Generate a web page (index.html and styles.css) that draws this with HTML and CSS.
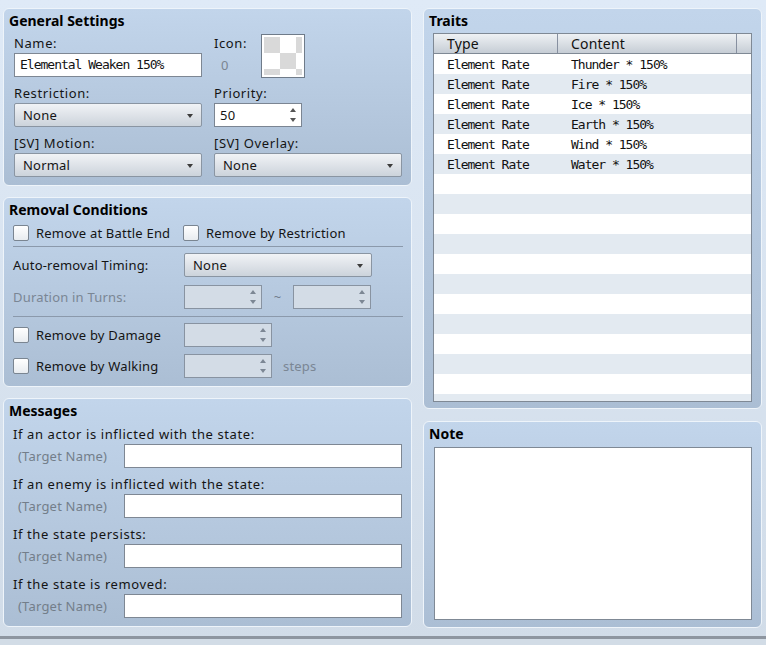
FILE: index.html
```html
<!DOCTYPE html>
<html>
<head>
<meta charset="utf-8">
<link rel="stylesheet" href="styles.css">
</head>
<body>
<div class="app">
  <div class="col left">
    <section class="panel general">
      <h2 class="ptitle">General Settings</h2>
      <div class="ggrid">
        <div class="field">
          <div class="lbl">Name:</div>
          <div class="textbox mono">Elemental Weaken 150%</div>
        </div>
        <div class="iconfield">
          <div class="iconlbl">
            <div class="lbl">Icon:</div>
            <div class="iconnum">0</div>
          </div>
          <div class="iconbox"><div class="checker"></div></div>
        </div>
        <div class="field">
          <div class="lbl">Restriction:</div>
          <div class="select w188"><span>None</span><span class="arrow"></span></div>
        </div>
        <div class="field">
          <div class="lbl">Priority:</div>
          <div class="spin w88"><span>50</span><span class="sarrows"><i class="up"></i><i class="dn"></i></span></div>
        </div>
        <div class="field">
          <div class="lbl">[SV] Motion:</div>
          <div class="select w188"><span>Normal</span><span class="arrow"></span></div>
        </div>
        <div class="field">
          <div class="lbl">[SV] Overlay:</div>
          <div class="select w188"><span>None</span><span class="arrow"></span></div>
        </div>
      </div>
    </section>

    <section class="panel removal">
      <h2 class="ptitle">Removal Conditions</h2>
      <div class="rbody">
        <div class="row checks">
          <label class="chk first"><span class="box"></span><span>Remove at Battle End</span></label>
          <label class="chk"><span class="box"></span><span>Remove by Restriction</span></label>
        </div>
        <div class="sep"></div>
        <div class="row r-auto">
          <span class="rlabel">Auto-removal Timing:</span>
          <div class="select w188"><span>None</span><span class="arrow"></span></div>
        </div>
        <div class="row r-dur">
          <span class="rlabel disabled">Duration in Turns:</span>
          <div class="spin w78 off"><span></span><span class="sarrows"><i class="up"></i><i class="dn"></i></span></div>
          <span class="tilde">~</span>
          <div class="spin w78 off"><span></span><span class="sarrows"><i class="up"></i><i class="dn"></i></span></div>
        </div>
        <div class="sep sep2"></div>
        <div class="row r-dmg">
          <label class="chk rlabel"><span class="box"></span><span>Remove by Damage</span></label>
          <div class="spin w88 off"><span></span><span class="sarrows"><i class="up"></i><i class="dn"></i></span></div>
        </div>
        <div class="row r-walk">
          <label class="chk rlabel"><span class="box"></span><span>Remove by Walking</span></label>
          <div class="spin w88 off"><span></span><span class="sarrows"><i class="up"></i><i class="dn"></i></span></div>
          <span class="steps disabled">steps</span>
        </div>
      </div>
    </section>

    <section class="panel messages">
      <h2 class="ptitle">Messages</h2>
      <div class="mbody">
        <div class="msg">
          <div class="lbl">If an actor is inflicted with the state:</div>
          <div class="mrow"><span class="tname">(Target Name)</span><div class="textbox w278"></div></div>
        </div>
        <div class="msg">
          <div class="lbl">If an enemy is inflicted with the state:</div>
          <div class="mrow"><span class="tname">(Target Name)</span><div class="textbox w278"></div></div>
        </div>
        <div class="msg">
          <div class="lbl">If the state persists:</div>
          <div class="mrow"><span class="tname">(Target Name)</span><div class="textbox w278"></div></div>
        </div>
        <div class="msg">
          <div class="lbl">If the state is removed:</div>
          <div class="mrow"><span class="tname">(Target Name)</span><div class="textbox w278"></div></div>
        </div>
      </div>
    </section>
  </div>

  <div class="col right">
    <section class="panel traits">
      <h2 class="ptitle">Traits</h2>
      <div class="table">
        <div class="thead">
          <div class="th c1">Type</div>
          <div class="th c2">Content</div>
          <div class="th c3"></div>
        </div>
        <div class="tbody">
          <div class="tr"><span class="td c1">Element Rate</span><span class="td">Thunder * 150%</span></div>
          <div class="tr"><span class="td c1">Element Rate</span><span class="td">Fire * 150%</span></div>
          <div class="tr"><span class="td c1">Element Rate</span><span class="td">Ice * 150%</span></div>
          <div class="tr"><span class="td c1">Element Rate</span><span class="td">Earth * 150%</span></div>
          <div class="tr"><span class="td c1">Element Rate</span><span class="td">Wind * 150%</span></div>
          <div class="tr"><span class="td c1">Element Rate</span><span class="td">Water * 150%</span></div>
          <div class="tr"></div><div class="tr"></div><div class="tr"></div><div class="tr"></div>
          <div class="tr"></div><div class="tr"></div><div class="tr"></div><div class="tr"></div>
          <div class="tr"></div><div class="tr"></div><div class="tr"></div><div class="tr"></div>
        </div>
      </div>
    </section>
    <section class="panel note">
      <h2 class="ptitle">Note</h2>
      <div class="notebox"></div>
    </section>
  </div>
</div>
<div class="footer"></div>
</body>
</html>
```

FILE: styles.css
```css
html, body {
  margin: 0;
  padding: 0;
}
body {
  width: 766px;
  height: 645px;
  overflow: hidden;
  background: linear-gradient(#dfeaf7, #d1dce8);
  font-family: "Noto Sans", "Open Sans", sans-serif;
  font-size: 13px;
  letter-spacing: 0.2px;
  color: #141414;
}
.app {
  display: flex;
  gap: 11px;
  padding: 8px 0 0 3px;
  height: 628px;
  box-sizing: border-box;
}
.col {
  display: flex;
  flex-direction: column;
}
.left { width: 409px; gap: 11px; }
.right { width: 339px; gap: 12px; }

.panel {
  box-sizing: border-box;
  border: 1px solid #eef4fa;
  border-radius: 6px;
  background: linear-gradient(#c2d5eb, #abbed4);
  padding: 3px 9px 0 5px;
}
.general { height: 178px; }
.removal { height: 190px; }
.messages { height: 229px; }
.traits { height: 401px; }
.note { height: 207px; }

.ptitle {
  margin: 0;
  font-size: 14px;
  font-weight: bold;
  letter-spacing: 0;
  line-height: 18px;
  height: 18px;
  color: #000;
}
.lbl {
  height: 20px;
  line-height: 20px;
  white-space: nowrap;
  letter-spacing: 0.6px;
}
.mono {
  font-family: "DejaVu Sans Mono", "Liberation Mono", monospace;
  font-size: 13px;
  letter-spacing: -1px;
}

/* controls */
.textbox {
  box-sizing: border-box;
  height: 24px;
  border: 1px solid #7e8793;
  background: #fff;
  padding-left: 5px;
  line-height: 22px;
}
.field .textbox { width: 188px; }
.w188 { width: 188px; }
.w88 { width: 88px; }
.w78 { width: 78px; }
.w278 { width: 278px; }

.select {
  box-sizing: border-box;
  height: 24px;
  border: 1px solid #8a95a2;
  border-radius: 2px;
  background: linear-gradient(#f1f3f6, #ccd3db);
  display: flex;
  align-items: center;
  justify-content: space-between;
  padding: 0 8px 0 8px;
  color: #151515;
}
.arrow {
  width: 0;
  height: 0;
  border-left: 3px solid transparent;
  border-right: 3px solid transparent;
  border-top: 4px solid #3c3c3c;
  margin-top: 1px;
}
.spin {
  box-sizing: border-box;
  height: 24px;
  border: 1px solid #7b8592;
  background: #fff;
  display: flex;
  align-items: center;
  justify-content: space-between;
  padding: 0 5px 0 5px;
}
.spin.off {
  background: #d3dce6;
  border-color: #8893a1;
}
.sarrows {
  display: flex;
  flex-direction: column;
  gap: 6px;
}
.sarrows i {
  display: block;
  width: 0;
  height: 0;
  border-left: 3.5px solid transparent;
  border-right: 3.5px solid transparent;
}
.sarrows .up { border-bottom: 4px solid #555; }
.sarrows .dn { border-top: 4px solid #555; }
.spin.off .sarrows .up { border-bottom-color: #7c8794; }
.spin.off .sarrows .dn { border-top-color: #7c8794; }

/* general grid */
.ggrid {
  display: grid;
  grid-template-columns: 188px 188px;
  column-gap: 12px;
  row-gap: 6px;
  margin: 3px 0 0 5px;
}
.iconfield {
  display: flex;
  height: 44px;
}
.iconlbl { width: 47px; }
.iconnum {
  height: 24px;
  line-height: 24px;
  padding-left: 7px;
  color: #7b8591;
}
.iconbox {
  box-sizing: border-box;
  width: 44px;
  height: 44px;
  margin-top: 1px;
  border: 1px solid #6f7b89;
  background: #fff;
  padding: 2px;
}
.checker {
  width: 38px;
  height: 38px;
  background: repeating-conic-gradient(#fff 0 25%, #d9d9d9 0 50%) 0 0 / 32px 32px;
}

/* removal */
.rbody { margin-left: 4px; }
.row {
  display: flex;
  align-items: center;
}
.checks { height: 20px; margin-top: 4px; }
.chk {
  display: flex;
  align-items: center;
  gap: 7px;
  white-space: nowrap;
}
.chk.first { width: 170px; }
.box {
  box-sizing: border-box;
  width: 16px;
  height: 16px;
  border: 1px solid #7a8591;
  border-radius: 2px;
  background: linear-gradient(#ffffff, #e8ecf0);
  flex: none;
}
.sep {
  width: 390px;
  height: 1px;
  background: #8b99ab;
  margin-top: 3px;
}
.sep2 { margin-top: 7px; }
.rlabel { width: 171px; flex: none; }
.r-auto { margin-top: 6px; }
.r-dur { margin-top: 8px; }
.r-dmg { margin-top: 6px; }
.r-walk { margin-top: 7px; }
.disabled { color: #7a8694; }
.tilde {
  width: 31px;
  text-align: center;
  color: #6f7c8b;
}
.steps { margin-left: 11px; }

/* messages */
.mbody { margin: 4px 0 0 4px; }
.msg + .msg { margin-top: 6px; }
.mrow {
  display: flex;
  align-items: center;
}
.tname {
  width: 106px;
  padding-left: 5px;
  color: #737e8a;
  white-space: nowrap;
}

/* traits table */
.table {
  box-sizing: border-box;
  margin: 3px 0 0 4px;
  width: 319px;
  height: 369px;
  border: 1px solid #7f8995;
  background: #fff;
  overflow: hidden;
}
.thead {
  display: flex;
  height: 19px;
  border-bottom: 1px solid #7f8995;
  background: linear-gradient(#eef1f4, #c6cdd5);
}
.th {
  box-sizing: border-box;
  height: 19px;
  line-height: 19px;
  font-size: 14px;
  letter-spacing: 0.2px;
  padding-left: 13px;
  color: #111;
}
.th.c1 { width: 124px; border-right: 1px solid #8790a0; }
.th.c2 { width: 179px; border-right: 1px solid #8790a0; }
.th.c3 { flex: 1; }
.tbody {
  height: 347px;
  overflow: hidden;
}
.tr {
  display: flex;
  height: 20px;
  box-sizing: border-box;
  padding-top: 2px;
  line-height: 18px;
  font-family: "DejaVu Sans Mono", "Liberation Mono", monospace;
  font-size: 13px;
  letter-spacing: -1px;
  color: #111;
  background: #fff;
}
.tr:nth-child(even) { background: #e3eaf1; }
.td { padding-left: 13px; white-space: nowrap; }
.td.c1 { width: 111px; }

.notebox {
  box-sizing: border-box;
  margin: 4px 0 0 5px;
  width: 318px;
  height: 173px;
  border: 1px solid #7f8995;
  background: #fff;
}

.footer {
  margin-top: 8px;
  height: 9px;
  border-top: 3px solid #8e96a0;
  background: #d2dce6;
}
```
